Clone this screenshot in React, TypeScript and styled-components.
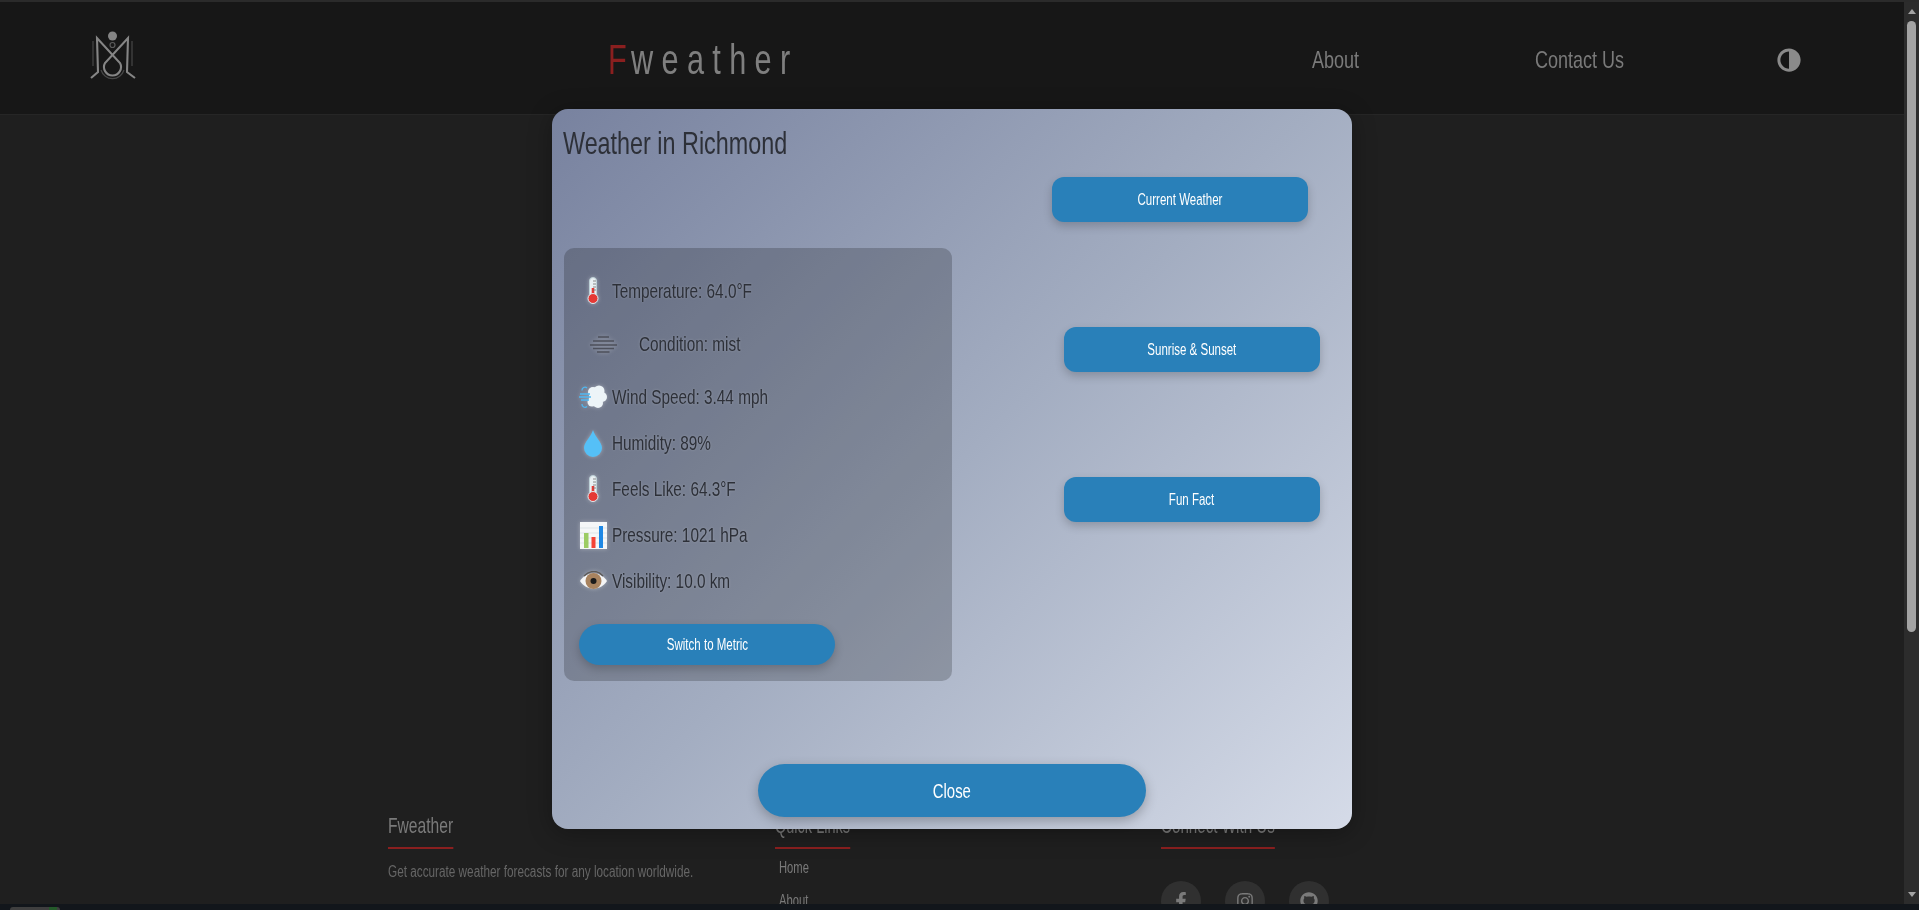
import React from 'react'
import styled, { createGlobalStyle } from 'styled-components'
import { FaAdjust, FaFacebookF, FaGithub, FaInstagram } from 'react-icons/fa'

const FONT = `"Liberation Sans", Arial, sans-serif`

const GlobalStyle = createGlobalStyle`
  html, body {
    margin: 0;
    height: 100%;
    overflow: hidden;
    background: #1f1f1f;
  }
  * { box-sizing: border-box; }
`

// the site's font is a tall condensed one, none is installed so squeeze Liberation Sans
const Squeezed = styled.span<{ $x?: number; $center?: boolean }>`
  display: inline-block;
  white-space: nowrap;
  transform: scaleX(${(p) => p.$x ?? 0.73});
  transform-origin: ${(p) => (p.$center ? 'center' : 'left center')};
`

const Frame = styled.div`
  display: flex;
  flex-direction: column;
  height: 100vh;
  font-family: ${FONT};
`

const TopStrip = styled.div`
  flex: none;
  height: 2px;
  background: #2b2b2b;
`

const Middle = styled.div`
  flex: 1;
  min-height: 0;
  display: flex;
`

const Viewport = styled.div`
  position: relative;
  flex: 1;
  min-width: 0;
  overflow: hidden;
  background: #1f1f1f;
`

const Header = styled.header`
  display: grid;
  grid-template-columns: 518px 704px 223px 242px auto;
  align-items: center;
  height: 113px;
  padding: 4px 0 0 90px;
  background: #171717;
  border-bottom: 1px solid #262626;
`

const LogoBox = styled.div`
  display: flex;
  margin-bottom: 8px;
`

const Brand = styled.div`
  font-size: 42px;
  letter-spacing: 11.4px;
  color: #7f7f7f;
  line-height: 1;
`

const BrandMark = styled.span`
  color: #8a1f1f;
  letter-spacing: 6px;
`

const NavLink = styled.a`
  font-size: 24px;
  color: #7a7a7a;
`

const ThemeToggle = styled.div`
  display: flex;
  color: #8a8a8a;
  transform: scaleX(-1);
  width: 24px;
`

const Main = styled.main`
  height: 698px;
`

const Footer = styled.footer`
  display: grid;
  grid-template-columns: repeat(3, minmax(0, 1fr));
  gap: 32px;
  width: 1128px;
  margin: 0 auto;
`

const FooterTitle = styled.h3<{ $x: number }>`
  display: inline-block;
  margin: 0 0 14px;
  padding-bottom: 8px;
  border-bottom: 2px solid #8a1f1f;
  font-size: 22px;
  font-weight: 400;
  white-space: nowrap;
  color: #7a7a7a;
  transform: scaleX(${(p) => p.$x});
  transform-origin: left center;
`

const FooterText = styled.p`
  margin: 0;
  font-size: 16px;
  white-space: nowrap;
  color: #666;
  transform: scaleX(0.735);
  transform-origin: left center;
`

const LinkList = styled.ul`
  display: flex;
  flex-direction: column;
  gap: 15px;
  margin: -4px 0 0;
  padding: 0 0 0 4px;
  list-style: none;
  font-size: 16px;
  color: #7a7a7a;
`

const Socials = styled.div`
  display: flex;
  gap: 24px;
  margin-top: 18px;
`

const SocialCircle = styled.a`
  display: flex;
  align-items: center;
  justify-content: center;
  width: 40px;
  height: 40px;
  border-radius: 50%;
  background: #303030;
  color: #7a7a7a;
  font-size: 18px;
`

const Modal = styled.section`
  position: absolute;
  top: 107px;
  left: 552px;
  display: flex;
  flex-direction: column;
  width: 800px;
  height: 720px;
  border-radius: 16px;
  background: linear-gradient(135deg, #78829f 0%, #a3adc1 50%, #d5dbe8 100%);
  box-shadow: 0 4px 24px rgba(0, 0, 0, 0.3);
`

const ModalTitle = styled.h2`
  flex: none;
  height: 68px;
  margin: 0;
  padding: 13px 0 0 11px;
  font-size: 32px;
  font-weight: 400;
  line-height: 42px;
  color: #2d3038;
`

const ModalBody = styled.div`
  flex: 1;
  display: grid;
  grid-template-columns: 400px 400px;
`

const LeftColumn = styled.div`
  padding: 71px 0 0 12px;
`

const RightColumn = styled.div`
  display: flex;
  flex-direction: column;
  gap: 105px;
`

const Panel = styled.div`
  width: 388px;
  height: 433px;
  padding: 25px 15px 15px;
  border-radius: 10px;
  background: rgba(0, 0, 0, 0.2);
`

const Rows = styled.ul`
  display: flex;
  flex-direction: column;
  gap: 10px;
  margin: 0 0 25px;
  padding: 0;
  list-style: none;
`

const Row = styled.li<{ $tall?: boolean }>`
  display: flex;
  align-items: center;
  height: ${(p) => (p.$tall ? '50px' : '36px')};
  font-size: 21px;
  color: #2d3038;
  text-shadow: 0 0 3px rgba(255, 255, 255, 0.25);
`

const IconSlot = styled.span<{ $wide?: boolean }>`
  flex: none;
  display: flex;
  align-items: center;
  justify-content: ${(p) => (p.$wide ? 'flex-start' : 'center')};
  width: ${(p) => (p.$wide ? '60px' : '33px')};
  padding-left: ${(p) => (p.$wide ? '11px' : '0')};
  padding-right: ${(p) => (p.$wide ? '0' : '5px')};
  filter: drop-shadow(0 0 2px rgba(255, 255, 255, 0.35));
`

const ActionButton = styled.button<{ $indent?: number; $pill?: boolean }>`
  display: block;
  flex: none;
  width: 256px;
  height: ${(p) => (p.$pill ? '41px' : '45px')};
  margin-left: ${(p) => p.$indent ?? 0}px;
  border: none;
  border-radius: ${(p) => (p.$pill ? '21px' : '12px')};
  background: #2980b9;
  box-shadow: 0 4px 10px rgba(0, 0, 0, 0.2);
  color: #fff;
  font-family: ${FONT};
  font-size: 16px;
`

const CloseButton = styled.button`
  flex: none;
  align-self: center;
  width: 388px;
  height: 53px;
  margin-bottom: 12px;
  border: none;
  border-radius: 27px;
  background: #2980b9;
  box-shadow: 0 4px 12px rgba(0, 0, 0, 0.25);
  color: #fff;
  font-family: ${FONT};
  font-size: 21px;
`

const Scrollbar = styled.div`
  flex: none;
  position: relative;
  display: flex;
  flex-direction: column;
  align-items: center;
  justify-content: space-between;
  width: 15px;
  padding: 7px 0 7px;
  background: #2c2c2c;
`

const ScrollArrow = styled.span<{ $down?: boolean }>`
  width: 0;
  height: 0;
  border-left: 4px solid transparent;
  border-right: 4px solid transparent;
  ${(p) => (p.$down ? 'border-top: 5px solid #a3a3a3;' : 'border-bottom: 5px solid #a3a3a3;')}
`

const ScrollThumb = styled.span`
  position: absolute;
  top: 19px;
  left: 3px;
  width: 9px;
  height: 611px;
  border-radius: 5px;
  background: #a3a3a3;
`

const BottomStrip = styled.div`
  flex: none;
  height: 6px;
  padding: 3px 0 0 10px;
  background: #12161b;
`

const TaskPill = styled.div`
  display: flex;
  justify-content: flex-end;
  width: 50px;
  height: 3px;
  padding-right: 3px;
  border-radius: 3px 3px 0 0;
  background: #3f3f3f;
`

const TaskDot = styled.span`
  width: 8px;
  background: #245a2a;
`

const Logo = () => (
  <svg width="47" height="50" viewBox="20 10 47 50" fill="none" stroke="#858585" strokeWidth="2.1">
    <path d="M23 20 V45 M62 20 V45 M31 49 A12 12 0 0 0 54 49" stroke="#474747" strokeWidth="1.2" />
    <circle cx="42.5" cy="15" r="4.5" fill="#858585" stroke="none" />
    <circle cx="42.5" cy="24" r="2.5" stroke="#5c5c5c" strokeWidth="1.2" />
    <path d="M21 57 L28 51 L27 17 L50 42 A8.5 8.5 0 1 1 35 42 L58 17 L57 51 L65 57" />
  </svg>
)

const Thermometer = () => (
  <svg width="14" height="28" viewBox="0 0 14 28">
    <rect x="3.5" y="0.5" width="7" height="20" rx="3.5" fill="#e9f0f3" stroke="#bcd0d6" />
    <rect x="5.7" y="11" width="2.6" height="10" fill="#e53935" />
    <path d="M7 4 H10 M7 7 H10 M7 10 H10 M7 13 H10" stroke="#6e6e6e" strokeWidth="0.8" />
    <circle cx="7" cy="21.5" r="5" fill="#e53935" stroke="#dfe9ed" />
  </svg>
)

const MistIcon = () => (
  <svg width="27" height="17" viewBox="0 0 27 17" stroke="#4d505b" strokeWidth="1.4">
    <path d="M8 1 H19 M3 5 H24 M0 9 H27 M3 12.5 H24 M7 16 H19.5" />
  </svg>
)

const WindIcon = () => (
  <svg width="28" height="24" viewBox="0 0 28 24">
    <g fill="#edf4f8">
      <circle cx="14" cy="7" r="5" />
      <circle cx="20" cy="6" r="5.5" />
      <circle cx="23" cy="12" r="5" />
      <circle cx="19" cy="18" r="5" />
      <circle cx="13" cy="17" r="4.5" />
      <circle cx="16" cy="12" r="6" />
    </g>
    <path d="M1 9 H11 M0 12 H12 M2 15 H10" stroke="#4fb8f2" strokeWidth="1.4" />
    <path d="M3 5.5 A3 3 0 0 1 8 3 M3 19 A3 3 0 0 0 8 21.5" stroke="#4fb8f2" strokeWidth="1.3" fill="none" />
  </svg>
)

const DropIcon = () => (
  <svg width="18" height="27" viewBox="0 0 18 27">
    <path d="M9 0 C11 7 18 12 18 18 A9 9 0 0 1 0 18 C0 12 7 7 9 0Z" fill="#55c0f7" />
  </svg>
)

const ChartIcon = () => (
  <svg width="27" height="27" viewBox="0 0 27 27">
    <rect width="27" height="27" fill="#f5f7f8" />
    <path d="M0 6 H27 M0 11 H27 M0 16 H27 M0 21 H27" stroke="#d5dde2" strokeWidth="0.7" />
    <rect x="4" y="11" width="4.5" height="15" fill="#9ccc65" />
    <rect x="11.5" y="15" width="4" height="11" fill="#f44336" />
    <rect x="19" y="4" width="4" height="22" fill="#1e88e5" />
  </svg>
)

const EyeIcon = () => (
  <svg width="27" height="20" viewBox="0 0 27 20">
    <path d="M0 10 C6 0 21 0 27 10 C21 20 6 20 0 10Z" fill="#f4f5f6" />
    <path d="M4 5 C10 -1 18 -1 23 5" stroke="#5d5a58" strokeWidth="1.4" fill="none" />
    <circle cx="13.5" cy="10" r="8" fill="#a8835f" />
    <circle cx="13.5" cy="10" r="3" fill="#1b1b1b" />
  </svg>
)

const readings = [
  { icon: <Thermometer />, text: 'Temperature: 64.0°F' },
  { icon: <MistIcon />, text: 'Condition: mist', tall: true },
  { icon: <WindIcon />, text: 'Wind Speed: 3.44 mph' },
  { icon: <DropIcon />, text: 'Humidity: 89%' },
  { icon: <Thermometer />, text: 'Feels Like: 64.3°F' },
  { icon: <ChartIcon />, text: 'Pressure: 1021 hPa' },
  { icon: <EyeIcon />, text: 'Visibility: 10.0 km' },
]

const App = () => (
  <Frame>
    <GlobalStyle />
    <TopStrip />
    <Middle>
      <Viewport>
        <Header>
          <LogoBox>
            <Logo />
          </LogoBox>
          <Brand>
            <Squeezed>
              <BrandMark>F</BrandMark>weather
            </Squeezed>
          </Brand>
          <NavLink>
            <Squeezed $x={0.75}>About</Squeezed>
          </NavLink>
          <NavLink>
            <Squeezed $x={0.75}>Contact Us</Squeezed>
          </NavLink>
          <ThemeToggle>
            <FaAdjust size={24} />
          </ThemeToggle>
        </Header>
        <Main />
        <Footer>
          <div>
            <FooterTitle $x={0.71}>Fweather</FooterTitle>
            <FooterText>Get accurate weather forecasts for any location worldwide.</FooterText>
          </div>
          <div>
            <FooterTitle $x={0.66}>Quick Links</FooterTitle>
            <LinkList>
              <li><Squeezed $x={0.7}>Home</Squeezed></li>
              <li><Squeezed $x={0.7}>About</Squeezed></li>
            </LinkList>
          </div>
          <div>
            <FooterTitle $x={0.69}>Connect With Us</FooterTitle>
            <Socials>
              <SocialCircle><FaFacebookF /></SocialCircle>
              <SocialCircle><FaInstagram /></SocialCircle>
              <SocialCircle><FaGithub /></SocialCircle>
            </Socials>
          </div>
        </Footer>
        <Modal>
          <ModalTitle>
            <Squeezed>Weather in Richmond</Squeezed>
          </ModalTitle>
          <ModalBody>
            <LeftColumn>
              <Panel>
                <Rows>
                  {readings.map((r) => (
                    <Row key={r.text} $tall={r.tall}>
                      <IconSlot $wide={r.tall}>{r.icon}</IconSlot>
                      <Squeezed>{r.text}</Squeezed>
                    </Row>
                  ))}
                </Rows>
                <ActionButton $pill>
                  <Squeezed $center $x={0.72}>Switch to Metric</Squeezed>
                </ActionButton>
              </Panel>
            </LeftColumn>
            <RightColumn>
              <ActionButton $indent={100}>
                <Squeezed $center $x={0.72}>Current Weather</Squeezed>
              </ActionButton>
              <ActionButton $indent={112}>
                <Squeezed $center $x={0.72}>Sunrise &amp; Sunset</Squeezed>
              </ActionButton>
              <ActionButton $indent={112}>
                <Squeezed $center $x={0.72}>Fun Fact</Squeezed>
              </ActionButton>
            </RightColumn>
          </ModalBody>
          <CloseButton>
            <Squeezed $center $x={0.71}>Close</Squeezed>
          </CloseButton>
        </Modal>
      </Viewport>
      <Scrollbar>
        <ScrollArrow />
        <ScrollThumb />
        <ScrollArrow $down />
      </Scrollbar>
    </Middle>
    <BottomStrip>
      <TaskPill>
        <TaskDot />
      </TaskPill>
    </BottomStrip>
  </Frame>
)

export default App
